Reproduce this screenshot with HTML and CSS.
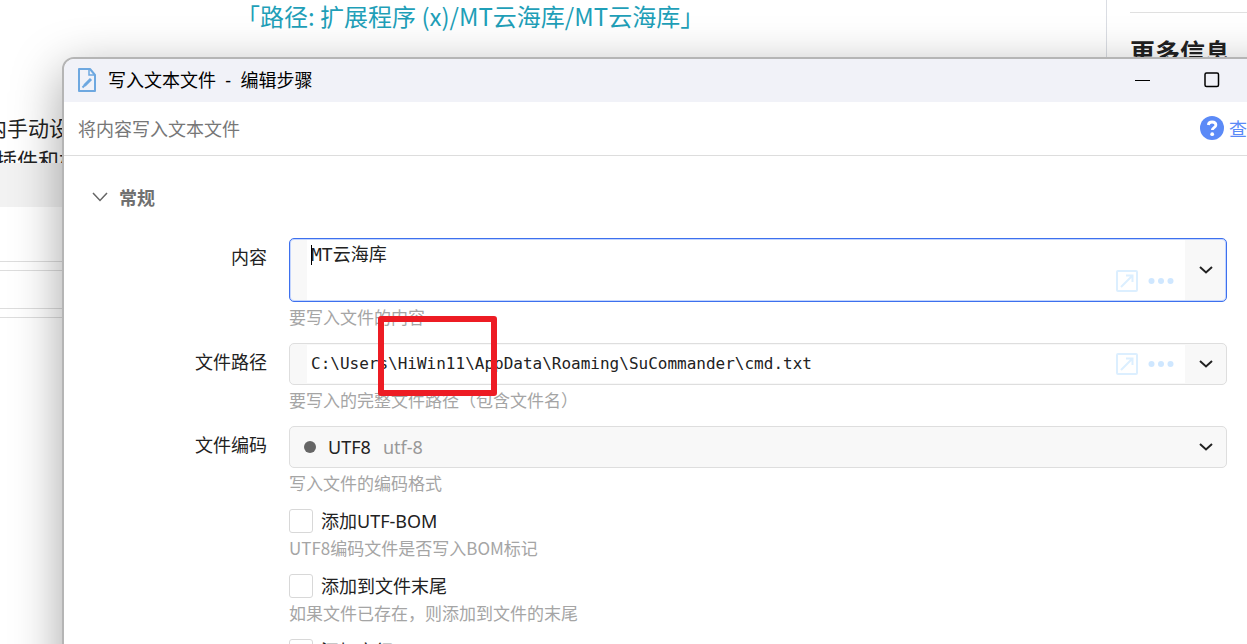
FILE: index.html
```html
<!DOCTYPE html>
<html lang="zh-CN">
<head>
    <meta charset="UTF-8">
    <meta name="viewport" content="width=device-width, initial-scale=1.0">
    <title>写入文本文件 - 编辑步骤</title>
    <link rel="stylesheet" href="styles.css">
</head>
<body>

    <!-- Página de fondo -->
    <div class="page">
        <main class="page-main">
            <p class="page-path">「路径: 扩展程序 (x)/MT云海库/MT云海库」</p>
            <p class="page-text">内手动设置</p>
            <p class="page-text page-text-cut">插件和相关</p>
            <div class="page-band"></div>
            <div class="page-box page-box-tall"></div>
            <div class="page-box"></div>
            <div class="page-rest"></div>
        </main>
        <aside class="page-side">
            <h2 class="side-title">更多信息</h2>
        </aside>
    </div>

    <!-- Ventana de edición -->
    <section class="window">
        <header class="titlebar">
            <svg class="file-icon" viewBox="0 0 20 26" fill="none" stroke="#6ea8e0" stroke-width="2">
                <path d="M2 2h11l5 6v16H2z" stroke-linejoin="round"/>
                <path d="M12 2v6h6" stroke-width="1.5"/>
                <path d="M5.5 20.5l2.5-2.5" stroke-width="2"/>
                <path d="M7.5 18.5l6.5-6.5" stroke-width="3"/>
            </svg>
            <h1 class="title">写入文本文件&nbsp; -&nbsp; 编辑步骤</h1>
            <button class="win-button" aria-label="最小化">
                <svg width="16" height="16" viewBox="0 0 16 16"><path d="M0 8.5h15" stroke="#000"/></svg>
            </button>
            <button class="win-button" aria-label="最大化">
                <svg width="16" height="16" viewBox="0 0 16 16" fill="none"><rect x="1" y="1" width="13.5" height="13.5" rx="1.5" stroke="#000" stroke-width="1.5"/></svg>
            </button>
        </header>

        <div class="description">
            <p class="description-text">将内容写入文本文件</p>
            <a class="help" href="#">
                <svg width="24" height="24" viewBox="0 0 24 24" fill="none">
                    <circle cx="12" cy="12" r="12" fill="#5b8af7"/>
                    <path d="M8.3 9c.3-2 1.7-3 3.7-3 2.2 0 3.9 1.2 3.9 3.1 0 2.7-3.6 2.5-3.6 5" stroke="#fff" stroke-width="2.8"/>
                    <circle cx="12.2" cy="18.2" r="1.9" fill="#fff"/>
                </svg>
                查看帮助
            </a>
        </div>

        <form class="form">
            <button class="group" type="button">
                <svg width="16" height="10" viewBox="0 0 16 10" fill="none" stroke="#666" stroke-width="1.5"><path d="M1 1l7 7.5L15 1"/></svg>
                常规
            </button>

            <div class="row">
                <label class="label" for="content">内容</label>
                <div class="field">
                    <div class="box box-tall box-focus">
                        <div class="gutter"></div>
                        <div class="editor">
                            <textarea class="input" id="content">MT云海库</textarea>
                            <span class="caret"></span>
                            <div class="tools">
                                <svg width="22" height="22" viewBox="0 0 22 22" fill="none"><rect x="1" y="1" width="20" height="20" rx="1" stroke="#dcefff" stroke-width="2"/><path d="M5 17L16 6M10 5.5h6.5V12" stroke="#dcefff" stroke-width="2"/></svg>
                                <svg width="26" height="8" viewBox="0 0 26 8" fill="#cfe7ff"><circle cx="3.5" cy="4" r="3"/><circle cx="13" cy="4" r="3"/><circle cx="22.5" cy="4" r="3"/></svg>
                            </div>
                        </div>
                        <button class="drop" type="button" aria-label="展开">
                            <svg width="14" height="8" viewBox="0 0 14 8" fill="none" stroke="#222" stroke-width="2"><path d="M1 1l6 5.5L13 1"/></svg>
                        </button>
                    </div>
                    <p class="hint">要写入文件的内容</p>
                </div>
            </div>

            <div class="row">
                <label class="label" for="path">文件路径</label>
                <div class="field">
                    <div class="box">
                        <div class="gutter"></div>
                        <div class="editor">
                            <input class="input input-path" id="path" type="text" value="C:\Users\HiWin11\AppData\Roaming\SuCommander\cmd.txt">
                            <div class="tools">
                                <svg width="22" height="22" viewBox="0 0 22 22" fill="none"><rect x="1" y="1" width="20" height="20" rx="1" stroke="#dcefff" stroke-width="2"/><path d="M5 17L16 6M10 5.5h6.5V12" stroke="#dcefff" stroke-width="2"/></svg>
                                <svg width="26" height="8" viewBox="0 0 26 8" fill="#cfe7ff"><circle cx="3.5" cy="4" r="3"/><circle cx="13" cy="4" r="3"/><circle cx="22.5" cy="4" r="3"/></svg>
                            </div>
                        </div>
                        <button class="drop" type="button" aria-label="展开">
                            <svg width="14" height="8" viewBox="0 0 14 8" fill="none" stroke="#222" stroke-width="2"><path d="M1 1l6 5.5L13 1"/></svg>
                        </button>
                    </div>
                    <p class="hint">要写入的完整文件路径（包含文件名）</p>
                    <div class="mark"></div>
                </div>
            </div>

            <div class="row">
                <label class="label" for="encoding">文件编码</label>
                <div class="field">
                    <div class="box box-select">
                        <span class="dot"></span>
                        <select class="select" id="encoding">
                            <option>UTF8</option>
                        </select>
                        <span class="select-note">utf-8</span>
                        <span class="drop">
                            <svg width="14" height="8" viewBox="0 0 14 8" fill="none" stroke="#222" stroke-width="2"><path d="M1 1l6 5.5L13 1"/></svg>
                        </span>
                    </div>
                    <p class="hint">写入文件的编码格式</p>
                </div>
            </div>

            <div class="row row-check">
                <div class="field">
                    <label class="check"><input class="checkbox" type="checkbox">添加UTF-BOM</label>
                    <p class="hint">UTF8编码文件是否写入BOM标记</p>
                </div>
            </div>

            <div class="row row-check">
                <div class="field">
                    <label class="check"><input class="checkbox" type="checkbox">添加到文件末尾</label>
                    <p class="hint">如果文件已存在，则添加到文件的末尾</p>
                </div>
            </div>

            <div class="row row-check">
                <div class="field">
                    <label class="check"><input class="checkbox" type="checkbox">添加空行</label>
                </div>
            </div>
        </form>
    </section>

</body>
</html>
```
FILE: styles.css
```css
* {
    box-sizing: border-box;
}
body, html {
    margin: 0;
    padding: 0;
    height: 100%;
    overflow: hidden;
}
body {
    position: relative;
    background-color: #fff;
    color: #222;
    font-family: "Noto Sans", "Noto Sans CJK SC", sans-serif;
    font-size: 18px;
}
h1, h2, p {
    margin: 0;
}
button {
    border: none;
    padding: 0;
    background: none;
    font-family: inherit;
    cursor: pointer;
}

/* Página de fondo */
.page {
    display: flex;
    height: 100%;
}
.page-main {
    flex: 1;
    display: flex;
    flex-direction: column;
    overflow: hidden;
}
.page-path {
    padding-left: 236px;
    margin-bottom: 80px;
    color: #1f9fb8;
    font-family: "Noto Sans CJK SC", sans-serif;
    font-size: 24px;
    line-height: 32px;
}
.page-text {
    margin-left: -14px;
    font-size: 21px;
    line-height: 32px;
}
.page-text-cut {
    margin-left: -4px;
    height: 19px;
    overflow: hidden;
}
.page-band {
    height: 44px;
    background-color: #f2f2f2;
}
.page-box {
    height: 47px;
    border-bottom: 1px solid #ddd;
    padding-top: 8px;
}
.page-box::before {
    content: "";
    display: block;
    border-top: 1px solid #ddd;
}
.page-box-tall {
    height: 55px;
}
.page-box-tall::before {
    display: none;
}
.page-rest {
    margin-top: 8px;
    border-top: 1px solid #ddd;
    flex: 1;
}
.page-side {
    width: 141px;
    border-left: 1px solid #dadde3;
    padding: 12px 0 0 23px;
}
.side-title {
    border-top: 1px solid #e0e0e0;
    padding-top: 20px;
    font-size: 25px;
    line-height: 38px;
    white-space: nowrap;
}

/* Ventana */
.window {
    position: absolute;
    top: 57px;
    left: 62px;
    right: -60px;
    bottom: -60px;
    border: 2px solid #b5b5b5;
    border-radius: 12px;
    background-color: #fff;
    box-shadow: 0 14px 50px rgba(0, 0, 0, 0.36);
    overflow: hidden;
}
.titlebar {
    display: flex;
    align-items: center;
    height: 43px;
    padding: 0 85px 2px 13px;
    background-color: #f1f2f8;
}
.file-icon {
    width: 20px;
    height: 26px;
}
.title {
    flex: 1;
    margin-left: 11px;
    color: #000;
    font-size: 18px;
    font-weight: 400;
    line-height: 24px;
}
.win-button {
    width: 16px;
    height: 16px;
    margin-left: 53px;
}
.win-button svg {
    display: block;
}
.description {
    display: flex;
    align-items: center;
    justify-content: space-between;
    height: 54px;
    padding: 0 4px 2px 14px;
    border-bottom: 1px solid #ddd;
}
.description-text {
    color: #777;
}
.help {
    display: flex;
    align-items: center;
    gap: 5px;
    color: #5b8af7;
    text-decoration: none;
}

/* Formulario */
.form {
    padding: 23px 78px 0 28px;
}
.group {
    display: flex;
    align-items: center;
    gap: 11px;
    height: 36px;
    margin-bottom: 23px;
    color: #707070;
    font-size: 18px;
    font-weight: 700;
}
.row {
    display: flex;
    gap: 22px;
    margin-bottom: 14px;
}
.row-check {
    padding-left: 197px;
}
.label {
    width: 175px;
    text-align: right;
    line-height: 38px;
}
.field {
    flex: 1;
    position: relative;
}
.box {
    display: flex;
    height: 42px;
    border: 1px solid #dedede;
    border-radius: 5px;
    background-color: #f8f8f8;
    overflow: hidden;
}
.box-tall {
    height: 64px;
}
.box-focus {
    border-color: #3d70ee;
    box-shadow: inset 0 0 0 1px #c4d5fd;
}
.gutter {
    width: 17px;
}
.editor {
    flex: 1;
    position: relative;
    display: flex;
    margin: 1px 0;
    background-color: #fff;
}
.input {
    flex: 1;
    border: none;
    outline: none;
    resize: none;
    padding: 2px 4px;
    background: none;
    color: #222;
    font-family: "DejaVu Sans Mono", "Noto Sans CJK SC", monospace;
    font-size: 18px;
    line-height: 26px;
}
.input-path {
    font-size: 16px;
}
.caret {
    position: absolute;
    top: 5px;
    left: 4px;
    width: 1px;
    height: 20px;
    background-color: #000;
}
.tools {
    display: flex;
    align-items: center;
    align-self: flex-end;
    gap: 10px;
    height: 38px;
    padding-right: 11px;
}
.drop {
    display: flex;
    align-items: center;
    justify-content: center;
    width: 41px;
}
.box-select {
    align-items: center;
    padding-left: 14px;
}
.dot {
    width: 12px;
    height: 12px;
    border-radius: 50%;
    background-color: #666;
}
.select {
    appearance: none;
    border: none;
    outline: none;
    margin: 0 12px;
    padding: 0;
    background: none;
    color: #222;
    font-family: inherit;
    font-size: 18px;
}
.select-note {
    flex: 1;
    color: #999;
}
.hint {
    margin-top: 3px;
    color: #a5a5a5;
    font-family: "Noto Sans CJK SC", sans-serif;
    font-size: 17px;
    line-height: 24px;
}
.check {
    display: flex;
    align-items: center;
    gap: 8px;
    height: 24px;
    line-height: 22px;
}
.checkbox {
    appearance: none;
    width: 24px;
    height: 24px;
    margin: 0;
    border: 1px solid #d8d8d8;
    border-radius: 3px;
    background-color: #fff;
}

/* Recuadro rojo sobre la ruta */
.mark {
    position: absolute;
    top: -27px;
    left: 89px;
    width: 119px;
    height: 80px;
    border: 6px solid #ed1c24;
    border-radius: 3px;
}
```
